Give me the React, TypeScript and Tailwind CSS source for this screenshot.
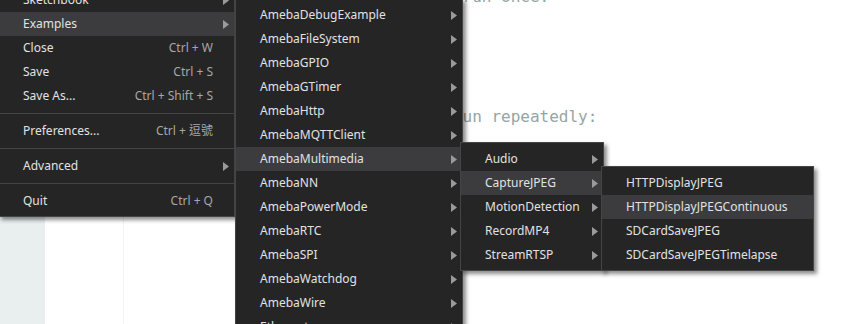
import React from 'react';

type Item =
  | { kind: 'item'; label: string; shortcut?: string; sub?: boolean; active?: boolean }
  | { kind: 'sep' };

const font = { fontFamily: '"Noto Sans", "Noto Sans CJK TC", sans-serif' };

function Arrow() {
  return (
    <svg width="6" height="9" viewBox="0 0 6 9" className="shrink-0">
      <path d="M0 0 L6 4.5 L0 9 Z" fill="#9a9a9a" />
    </svg>
  );
}

function Menu({ items, className }: { items: Item[]; className: string }) {
  return (
    <div
      className={`absolute bg-[#252526] border border-[#454545] pt-[4px] pb-[3px] shadow-[3px_3px_4px_rgba(0,0,0,0.45)] ${className}`}
      style={font}
    >
      {items.map((it, i) =>
        it.kind === 'sep' ? (
          <div key={i} className="py-[5px]">
            <div className="h-px bg-[#454545]" />
          </div>
        ) : (
          <div
            key={i}
            className={`h-6 flex items-center pl-[24px] pr-[5px] text-[12px] text-[#e2e2e2] ${
              it.active ? 'bg-[#3c3c3f]' : ''
            }`}
          >
            <span className="flex-1 whitespace-nowrap">{it.label}</span>
            {it.shortcut && <span className="text-[#a7a7a7] mr-[16px] whitespace-nowrap">{it.shortcut}</span>}
            {it.sub && <Arrow />}
          </div>
        )
      )}
    </div>
  );
}

const fileMenu: Item[] = [
  { kind: 'item', label: 'Sketchbook', sub: true },
  { kind: 'item', label: 'Examples', sub: true, active: true },
  { kind: 'item', label: 'Close', shortcut: 'Ctrl + W' },
  { kind: 'item', label: 'Save', shortcut: 'Ctrl + S' },
  { kind: 'item', label: 'Save As...', shortcut: 'Ctrl + Shift + S' },
  { kind: 'sep' },
  { kind: 'item', label: 'Preferences...', shortcut: 'Ctrl + 逗號' },
  { kind: 'sep' },
  { kind: 'item', label: 'Advanced', sub: true },
  { kind: 'sep' },
  { kind: 'item', label: 'Quit', shortcut: 'Ctrl + Q' },
];

const examples: Item[] = [
  'AmebaDebugExample',
  'AmebaFileSystem',
  'AmebaGPIO',
  'AmebaGTimer',
  'AmebaHttp',
  'AmebaMQTTClient',
  'AmebaMultimedia',
  'AmebaNN',
  'AmebaPowerMode',
  'AmebaRTC',
  'AmebaSPI',
  'AmebaWatchdog',
  'AmebaWire',
  'Ethernet',
].map((l) => ({ kind: 'item' as const, label: l, sub: true, active: l === 'AmebaMultimedia' }));

const multimedia: Item[] = ['Audio', 'CaptureJPEG', 'MotionDetection', 'RecordMP4', 'StreamRTSP'].map((l) => ({
  kind: 'item' as const,
  label: l,
  sub: true,
  active: l === 'CaptureJPEG',
}));

const capture: Item[] = [
  'HTTPDisplayJPEG',
  'HTTPDisplayJPEGContinuous',
  'SDCardSaveJPEG',
  'SDCardSaveJPEGTimelapse',
].map((l) => ({ kind: 'item' as const, label: l, active: l === 'HTTPDisplayJPEGContinuous' }));

const code = [
  'void setup() {',
  '  // put your setup code here, to run once:',
  '',
  '}',
  '',
  'void loop() {',
  '  // put your main code here, to run repeatedly:',
  '',
  '}',
];

export default function App() {
  return (
    <div className="relative w-[857px] h-[324px] overflow-hidden bg-white flex">
      <div className="w-[45px] bg-[#e9efef] shrink-0" />
      <div className="w-[79px] shrink-0 border-r border-[#f1f1f1]" />
      <div
        className="pl-[11px] -mt-[39px] text-[16px] leading-6 text-[#95a5a6] whitespace-pre"
        style={{ fontFamily: '"DejaVu Sans Mono", monospace' }}
      >
        {code.map((l, i) => (
          <div key={i} className="h-6">
            {l}
          </div>
        ))}
      </div>

      <Menu items={fileMenu} className="left-[-2px] top-[-17px] w-[237px]" />
      <Menu items={examples} className="left-[235px] top-[-2px] w-[228px]" />
      <Menu items={multimedia} className="left-[460px] top-[142px] w-[144px]" />
      <Menu items={capture} className="left-[601px] top-[166px] w-[213px]" />
    </div>
  );
}
